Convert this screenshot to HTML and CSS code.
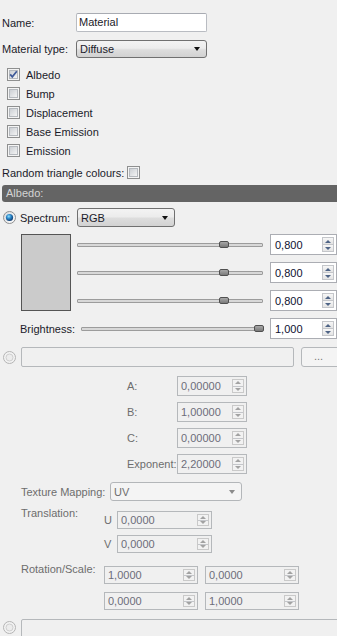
FILE: index.html
```html
<!DOCTYPE html>
<html>
<head>
<meta charset="utf-8">
<link rel="stylesheet" href="styles.css">
</head>
<body>
<div class="panel">
  <div class="row r-name">
    <span class="lbl w-first">Name:</span>
    <div class="textbox">Material</div>
  </div>
  <div class="row r-type">
    <span class="lbl w-first">Material type:</span>
    <div class="select sel-type"><span class="sv">Diffuse</span><i class="arr"></i></div>
  </div>

  <div class="checks">
    <div class="check-row">
      <svg class="cb" width="13" height="13" viewBox="0 0 13 13"><defs><linearGradient id="g1" x1="0" y1="0" x2="1" y2="1"><stop offset="0" stop-color="#c9cdd2"/><stop offset="1" stop-color="#f6f6f6"/></linearGradient></defs><rect x="0.5" y="0.5" width="12" height="12" fill="#f4f4f4" stroke="#8e8f8f"/><rect x="2.5" y="2.5" width="8" height="8" fill="url(#g1)" stroke="#b5b9be"/><path d="M3.2 6.4 L5.3 8.9 L9.8 3.3" fill="none" stroke="#3f5a99" stroke-width="1.7"/></svg>
      <span>Albedo</span>
    </div>
    <div class="check-row">
      <svg class="cb" width="13" height="13" viewBox="0 0 13 13"><rect x="0.5" y="0.5" width="12" height="12" fill="#f4f4f4" stroke="#8e8f8f"/><rect x="2.5" y="2.5" width="8" height="8" fill="url(#g1)" stroke="#b5b9be"/></svg>
      <span>Bump</span>
    </div>
    <div class="check-row">
      <svg class="cb" width="13" height="13" viewBox="0 0 13 13"><rect x="0.5" y="0.5" width="12" height="12" fill="#f4f4f4" stroke="#8e8f8f"/><rect x="2.5" y="2.5" width="8" height="8" fill="url(#g1)" stroke="#b5b9be"/></svg>
      <span>Displacement</span>
    </div>
    <div class="check-row">
      <svg class="cb" width="13" height="13" viewBox="0 0 13 13"><rect x="0.5" y="0.5" width="12" height="12" fill="#f4f4f4" stroke="#8e8f8f"/><rect x="2.5" y="2.5" width="8" height="8" fill="url(#g1)" stroke="#b5b9be"/></svg>
      <span>Base Emission</span>
    </div>
    <div class="check-row">
      <svg class="cb" width="13" height="13" viewBox="0 0 13 13"><rect x="0.5" y="0.5" width="12" height="12" fill="#f4f4f4" stroke="#8e8f8f"/><rect x="2.5" y="2.5" width="8" height="8" fill="url(#g1)" stroke="#b5b9be"/></svg>
      <span>Emission</span>
    </div>
  </div>

  <div class="row r-random">
    <span class="w-random">Random triangle colours:</span>
    <svg class="cb" width="13" height="13" viewBox="0 0 13 13"><rect x="0.5" y="0.5" width="12" height="12" fill="#f4f4f4" stroke="#8e8f8f"/><rect x="2.5" y="2.5" width="8" height="8" fill="url(#g1)" stroke="#b5b9be"/></svg>
  </div>

  <div class="header">Albedo:</div>

  <div class="row r-spectrum">
    <svg class="radio" width="13" height="13" viewBox="0 0 13 13"><defs><radialGradient id="rb" cx="0.4" cy="0.35" r="0.7"><stop offset="0" stop-color="#8fe0ff"/><stop offset="0.45" stop-color="#2a86c8"/><stop offset="1" stop-color="#0b2f62"/></radialGradient><linearGradient id="rg" x1="0" y1="0" x2="1" y2="1"><stop offset="0" stop-color="#d6d9dd"/><stop offset="1" stop-color="#ffffff"/></linearGradient></defs><circle cx="6.5" cy="6.5" r="6" fill="url(#rg)" stroke="#8e8f8f"/><circle cx="6.5" cy="6.5" r="3.6" fill="url(#rb)"/></svg>
    <span class="lbl w-spec">Spectrum:</span>
    <div class="select sel-rgb"><span class="sv">RGB</span><i class="arr"></i></div>
  </div>

  <div class="rgb-block">
    <div class="swatch"></div>
    <div class="slider-col">
      <div class="slider-row">
        <div class="track t-rgb"><i class="handle" style="left:141px"></i></div>
        <div class="spin sp-main"><span class="v">0,800</span><span class="btns"><i class="up"></i><i class="dn"></i></span></div>
      </div>
      <div class="slider-row">
        <div class="track t-rgb"><i class="handle" style="left:141px"></i></div>
        <div class="spin sp-main"><span class="v">0,800</span><span class="btns"><i class="up"></i><i class="dn"></i></span></div>
      </div>
      <div class="slider-row">
        <div class="track t-rgb"><i class="handle" style="left:141px"></i></div>
        <div class="spin sp-main"><span class="v">0,800</span><span class="btns"><i class="up"></i><i class="dn"></i></span></div>
      </div>
    </div>
  </div>

  <div class="row r-bright">
    <span class="lbl w-bright">Brightness:</span>
    <div class="track t-bright"><i class="handle" style="left:172px"></i></div>
    <div class="spin sp-main"><span class="v">1,000</span><span class="btns"><i class="up"></i><i class="dn"></i></span></div>
  </div>

  <div class="row r-file">
    <svg class="radio" width="13" height="13" viewBox="0 0 13 13"><circle cx="6.5" cy="6.5" r="6" fill="#f2f2f2" stroke="#b4b4b4"/><circle cx="6.5" cy="6.5" r="3.5" fill="#ececec" stroke="#cfcfcf"/></svg>
    <div class="field f-file"></div>
    <div class="btn-dots">...</div>
  </div>

  <div class="params">
    <div class="param-row"><span class="dlbl w-param">A:</span><div class="spin dis sp-param"><span class="v">0,00000</span><span class="btns"><i class="up"></i><i class="dn"></i></span></div></div>
    <div class="param-row"><span class="dlbl w-param">B:</span><div class="spin dis sp-param"><span class="v">1,00000</span><span class="btns"><i class="up"></i><i class="dn"></i></span></div></div>
    <div class="param-row"><span class="dlbl w-param">C:</span><div class="spin dis sp-param"><span class="v">0,00000</span><span class="btns"><i class="up"></i><i class="dn"></i></span></div></div>
    <div class="param-row"><span class="dlbl w-param">Exponent:</span><div class="spin dis sp-param"><span class="v">2,20000</span><span class="btns"><i class="up"></i><i class="dn"></i></span></div></div>
  </div>

  <div class="row r-tex">
    <span class="dlbl w-tex">Texture Mapping:</span>
    <div class="select dis sel-uv"><span class="sv">UV</span><i class="arr"></i></div>
  </div>

  <div class="block b-trans">
    <span class="dlbl w-trans">Translation:</span>
    <div class="trans-grid">
      <span class="dlbl">U</span>
      <div class="spin dis sp-small"><span class="v">0,0000</span><span class="btns"><i class="up"></i><i class="dn"></i></span></div>
      <span class="dlbl">V</span>
      <div class="spin dis sp-small"><span class="v">0,0000</span><span class="btns"><i class="up"></i><i class="dn"></i></span></div>
    </div>
  </div>

  <div class="block b-rot">
    <span class="dlbl w-trans">Rotation/Scale:</span>
    <div class="rot-grid">
      <div class="spin dis sp-rot"><span class="v">1,0000</span><span class="btns"><i class="up"></i><i class="dn"></i></span></div>
      <div class="spin dis sp-rot"><span class="v">0,0000</span><span class="btns"><i class="up"></i><i class="dn"></i></span></div>
      <div class="spin dis sp-rot"><span class="v">0,0000</span><span class="btns"><i class="up"></i><i class="dn"></i></span></div>
      <div class="spin dis sp-rot"><span class="v">1,0000</span><span class="btns"><i class="up"></i><i class="dn"></i></span></div>
    </div>
  </div>

  <div class="row r-last">
    <svg class="radio" width="13" height="13" viewBox="0 0 13 13"><circle cx="6.5" cy="6.5" r="6" fill="#f2f2f2" stroke="#b4b4b4"/><circle cx="6.5" cy="6.5" r="3.5" fill="#ececec" stroke="#cfcfcf"/></svg>
    <div class="field f-last"></div>
  </div>
</div>
</body>
</html>
```
FILE: styles.css
```css
html, body {
  margin: 0;
  padding: 0;
  overflow: hidden;
  background: #f0f0f0;
}
body {
  font-family: "Liberation Sans", Arial, sans-serif;
  font-size: 11px;
  color: #1b1b2a;
  width: 337px;
  height: 636px;
}
.panel {
  padding-top: 13px;
  width: 337px;
}
.row {
  display: flex;
  align-items: center;
}
.lbl, .dlbl {
  flex: none;
  white-space: nowrap;
}
.dlbl { color: #6d6d6d; }

.r-name { padding-left: 2px; height: 19px; }
.w-first { width: 74px; }
.textbox {
  box-sizing: border-box;
  width: 131px;
  height: 19px;
  border: 1px solid #b9bcc2;
  border-top-color: #a8abb2;
  border-radius: 2px;
  background: #fff;
  padding-left: 2px;
  line-height: 17px;
}
.r-type { padding-left: 2px; height: 18px; margin-top: 8px; }

.select {
  box-sizing: border-box;
  display: flex;
  align-items: center;
  border: 1px solid #707070;
  border-radius: 3px;
  background: linear-gradient(#f3f3f3 0%, #ececec 45%, #dddddd 55%, #d2d2d2 100%);
  padding-left: 3px;
}
.select .sv { flex: 1; }
.select .arr {
  width: 0; height: 0;
  border-left: 3.5px solid transparent;
  border-right: 3.5px solid transparent;
  border-top: 4px solid #111;
  margin-right: 6px;
}
.sel-type { width: 131px; height: 18px; }
.sel-rgb { width: 98px; height: 19px; }
.select.dis {
  border-color: #b3b6b9;
  background: #f4f4f4;
  color: #6d6d6d;
}
.select.dis .arr { border-top-color: #8a8a8a; margin-right: 6px; }
.sel-uv { width: 132px; height: 19px; }

.checks { margin-top: 7px; padding-left: 7px; }
.check-row {
  display: flex;
  align-items: center;
  gap: 6px;
  height: 19px;
}
.cb, .radio { flex: none; display: block; }

.r-random { padding-left: 2px; height: 19px; margin-top: 3px; }
.w-random { width: 125px; white-space: nowrap; flex: none; }

.header {
  margin-top: 3px;
  margin-left: 2px;
  height: 17px;
  line-height: 17px;
  background: #646464;
  color: #d4d4d4;
  padding-left: 4px;
  border-radius: 3px 0 0 3px;
}

.r-spectrum { margin-top: 6px; height: 19px; padding-left: 3px; }
.r-spectrum .radio { margin-right: 4px; }
.w-spec { width: 57px; }

.rgb-block {
  display: flex;
  gap: 6px;
  padding-left: 21px;
  margin-top: 7px;
}
.swatch {
  box-sizing: border-box;
  width: 50px;
  height: 77px;
  background: #cbcbcb;
  border: 1px solid #555;
}
.slider-col { display: flex; flex-direction: column; gap: 7px; }
.slider-row { display: flex; align-items: center; gap: 7px; height: 21px; }

.track {
  position: relative;
  box-sizing: border-box;
  height: 4px;
  border: 1px solid #9c9c9c;
  border-radius: 1px;
  background: #d8d8d8;
  flex: none;
}
.t-rgb { width: 186px; }
.t-bright { width: 182px; margin-right: 7px; }
.handle {
  position: absolute;
  top: -3px;
  width: 10px;
  height: 7px;
  box-sizing: border-box;
  border: 1px solid #505050;
  border-radius: 2px;
  background: linear-gradient(#a8a8a8, #7a7a7a);
}

.spin {
  box-sizing: border-box;
  display: flex;
  align-items: center;
  flex: none;
  border: 1px solid #abadb3;
  background: #fff;
  color: #0e1030;
}
.spin .v { flex: 1; padding-left: 4px; }
.btns {
  align-self: stretch;
  display: flex;
  flex-direction: column;
  box-sizing: border-box;
  width: 12px;
  margin: 2px 2px 2px 0;
  border: 1px solid #c4c6ca;
}
.btns i {
  flex: 1;
  display: flex;
  align-items: center;
  justify-content: center;
  background: linear-gradient(#f7f7f7, #e4e4e4);
}
.btns i + i { border-top: 1px solid #c4c6ca; }
.btns .up::after {
  content: "";
  border-left: 3px solid transparent;
  border-right: 3px solid transparent;
  border-bottom: 3px solid #4f6486;
}
.btns .dn::after {
  content: "";
  border-left: 3px solid transparent;
  border-right: 3px solid transparent;
  border-top: 3px solid #4f6486;
}
.sp-main { width: 67px; height: 21px; }
.spin.dis {
  background: #f0f0f0;
  border-color: #b5b8bb;
  color: #6d6d7a;
}
.spin.dis .v { padding-left: 3px; }
.spin.dis .btns { border-color: #c9c9c9; }
.spin.dis .btns i { background: #f2f2f2; }
.spin.dis .up::after { border-bottom-color: #a2a2a2; }
.spin.dis .dn::after { border-top-color: #a2a2a2; }

.r-bright { margin-top: 7px; padding-left: 20px; height: 21px; }
.w-bright { width: 61px; }

.r-file { margin-top: 8px; height: 20px; padding-left: 3px; }
.r-file .radio { margin-right: 5px; }
.field {
  box-sizing: border-box;
  height: 20px;
  border: 1px solid #b5b8bb;
  border-radius: 2px;
  background: #f0f0f0;
  flex: none;
}
.f-file { width: 273px; margin-right: 7px; }
.btn-dots {
  box-sizing: border-box;
  flex: none;
  width: 40px;
  height: 20px;
  border: 1px solid #b5b8bb;
  border-radius: 3px;
  background: #f4f4f4;
  color: #7a7a7a;
  padding-left: 12px;
  line-height: 16px;
}

.params {
  margin-top: 9px;
  padding-left: 127px;
  display: flex;
  flex-direction: column;
  gap: 6px;
}
.param-row { display: flex; align-items: center; height: 20px; }
.w-param { width: 50px; }
.sp-param { width: 70px; height: 20px; }

.r-tex { margin-top: 8px; padding-left: 21px; height: 19px; }
.w-tex { width: 89px; }

.block {
  display: flex;
  align-items: flex-start;
  padding-left: 21px;
}
.w-trans { width: 83px; line-height: 14px; }
.b-trans { margin-top: 5px; }
.trans-grid {
  display: grid;
  grid-template-columns: 13px 95px;
  row-gap: 6px;
  align-items: center;
  padding-top: 5px;
}
.sp-small { height: 18px; }

.b-rot { margin-top: 9px; }
.rot-grid {
  display: grid;
  grid-template-columns: 94px 94px;
  column-gap: 7px;
  row-gap: 8px;
  padding-top: 4px;
}
.sp-rot { height: 18px; }

.r-last { margin-top: 9px; height: 20px; padding-left: 3px; align-items: flex-start; }
.r-last .radio { margin-top: 2px; margin-right: 5px; }
.f-last { width: 320px; }
```
